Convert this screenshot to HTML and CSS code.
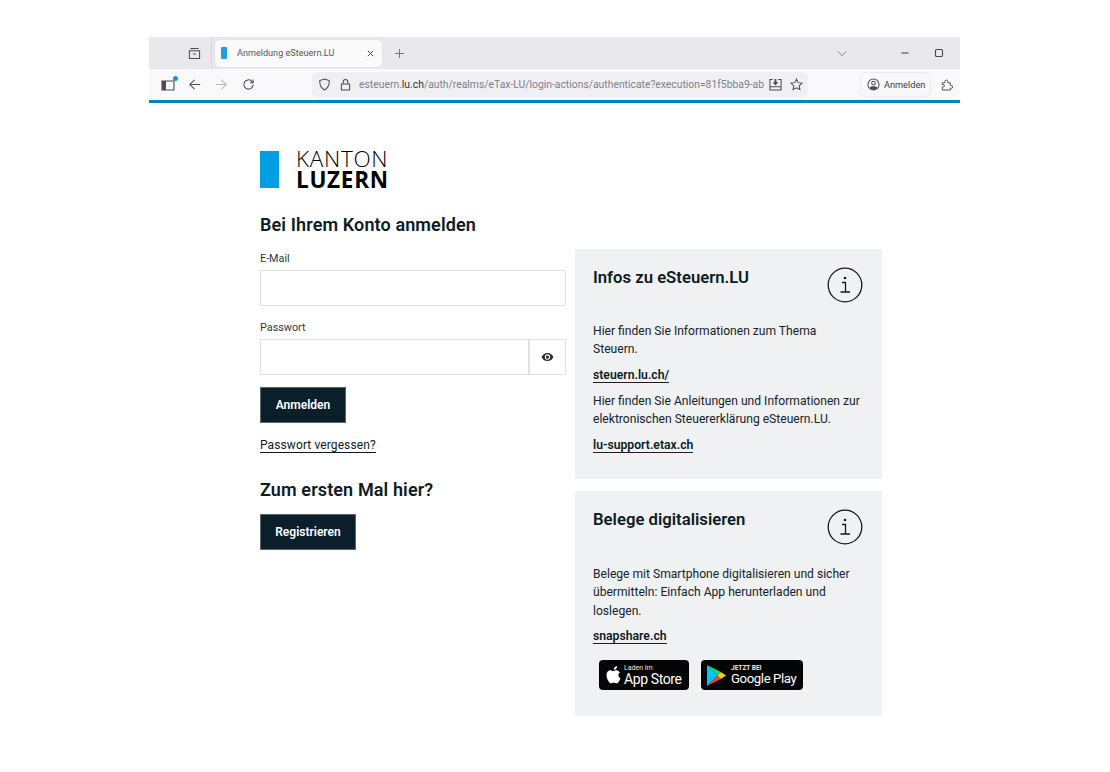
FILE: index.html
```html
<!DOCTYPE html>
<html lang="de">
<head>
    <meta charset="UTF-8">
    <title>Anmeldung eSteuern.LU</title>
    <link rel="stylesheet" href="styles.css">
</head>
<body>
<div class="window">
    <!-- Browser -->
    <div class="tabstrip">
        <svg class="ic tabs-ic" viewBox="0 0 14 14"><path d="M2.5 1.5h9M1.5 4h11v8.5h-11zM5.5 7.5h3"/></svg>
        <div class="strip-sep"></div>
        <div class="tab">
            <span class="favicon"></span>
            <span class="tab-title">Anmeldung eSteuern.LU</span>
            <svg class="ic tab-close" viewBox="0 0 10 10"><path d="M2 2l6 6M8 2l-6 6"/></svg>
        </div>
        <svg class="ic new-tab" viewBox="0 0 12 12"><path d="M6 1v10M1 6h10"/></svg>
        <div class="strip-right">
            <svg class="ic chev" viewBox="0 0 12 8"><path d="M1 1.5l5 5 5-5"/></svg>
            <svg class="ic minim" viewBox="0 0 10 10"><path d="M1.5 5h7"/></svg>
            <svg class="ic maxim" viewBox="0 0 10 10"><rect x="1.5" y="1.5" width="7" height="7" rx="1"/></svg>
        </div>
    </div>
    <div class="toolbar">
        <span class="sidebar-btn">
            <svg class="ic" viewBox="0 0 14 12" width="14" height="12"><path d="M1 2h12v9H1z"/><path class="fill" d="M1 2h4v9H1z"/></svg>
            <span class="dot"></span>
        </span>
        <svg class="ic nav back" viewBox="0 0 14 14"><path d="M13 7H2M7 2L2 7l5 5"/></svg>
        <svg class="ic nav fwd" viewBox="0 0 14 14"><path d="M1 7h11M7 2l5 5-5 5"/></svg>
        <svg class="ic nav reload" viewBox="0 0 14 14"><path d="M12 7a5 5 0 1 1-1.6-3.7L12 5M12 1.5V5H8.5"/></svg>
        <div class="urlbar">
            <svg class="ic shield" viewBox="0 0 14 14"><path d="M7 1l5.2 1.8c0 4.800-1.500 8.300-5.200 10.200C3.300 11.100 1.800 7.600 1.800 2.800z"/></svg>
            <svg class="ic lock" viewBox="0 0 12 14"><path d="M1.500 6.500h9v6.500h-9zM3.500 6.500V4a2.500 2.500 0 0 1 5 0v2.500"/></svg>
            <span class="url">esteuern.<b>lu.ch</b>/auth/realms/eTax-LU/login-actions/authenticate?execution=81f5bba9-ab</span>
            <svg class="ic save" viewBox="0 0 14 14"><path d="M4 1.500H1v11.500h12V1.500h-3M1 9.500h12"/><path class="fill" d="M6 1h2v3.500h2L7 8 4 4.500h2z"/></svg>
            <svg class="ic star" viewBox="0 0 14 14"><path d="M7 1.200l1.800 3.800 4.100.5-3 2.900.8 4.100L7 10.500l-3.700 2 .8-4.100-3-2.900 4.100-.5z"/></svg>
        </div>
        <div class="signin">
            <svg class="ic" viewBox="0 0 14 14" width="13" height="13"><circle cx="7" cy="7" r="6"/><circle cx="7" cy="5.500" r="2"/><path class="fill" d="M3 10.500c1-2 7-2 8 0-2 2.500-6 2.500-8 0z"/></svg>
            <span>Anmelden</span>
        </div>
        <svg class="ic ext" viewBox="0 0 14 14"><path d="M1.500 5h3V3.500a1.700 1.700 0 0 1 3.400 0V5h3v3h1a1.700 1.700 0 0 1 0 3.400h-1v2h-9.400V10h1a1.500 1.500 0 0 0 0-3h-1z"/></svg>
    </div>
    <div class="accent"></div>

    <!-- Seite -->
    <main class="page">
        <div class="logo">
            <span class="logo-bar"></span>
            <div class="logo-text">
                <span class="kanton">KANTON</span>
                <span class="luzern">LUZERN</span>
            </div>
        </div>
        <h1>Bei Ihrem Konto anmelden</h1>
        <div class="columns">
            <section class="login">
                <label class="first">E-Mail</label>
                <input class="field" type="text">
                <label>Passwort</label>
                <div class="pw-row">
                    <input class="field" type="password">
                    <button class="eye" type="button">
                        <svg viewBox="0 0 16 12" width="13" height="10"><path d="M8 1C4.500 1 1.800 3.200.7 6c1.100 2.800 3.800 5 7.300 5s6.200-2.200 7.300-5C14.200 3.200 11.500 1 8 1zm0 8.300A3.300 3.300 0 1 1 8 2.700a3.300 3.300 0 0 1 0 6.600zM8 4a2 2 0 1 0 0 4 2 2 0 0 0 0-4z"/></svg>
                    </button>
                </div>
                <button class="btn btn-login" type="button">Anmelden</button>
                <a class="forgot" href="#">Passwort vergessen?</a>
                <h2>Zum ersten Mal hier?</h2>
                <button class="btn btn-register" type="button">Registrieren</button>
            </section>
            <aside class="side">
                <div class="panel panel-info">
                    <div class="panel-head">
                        <h3>Infos zu eSteuern.LU</h3>
                        <svg class="info" viewBox="0 0 36 36"><circle cx="18" cy="18" r="16.800"/><path d="M15 15.500h3.500v9.500M13.500 25h9.500"/><circle class="i-dot" cx="18" cy="11" r="1.300"/></svg>
                    </div>
                    <p>Hier finden Sie Informationen zum Thema Steuern.</p>
                    <a href="#">steuern.lu.ch/</a>
                    <p>Hier finden Sie Anleitungen und Informationen zur elektronischen Steuererklärung eSteuern.LU.</p>
                    <a href="#">lu-support.etax.ch</a>
                </div>
                <div class="panel panel-docs">
                    <div class="panel-head">
                        <h3>Belege digitalisieren</h3>
                        <svg class="info" viewBox="0 0 36 36"><circle cx="18" cy="18" r="16.800"/><path d="M15 15.500h3.500v9.500M13.500 25h9.500"/><circle class="i-dot" cx="18" cy="11" r="1.300"/></svg>
                    </div>
                    <p>Belege mit Smartphone digitalisieren und sicher übermitteln: Einfach App herunterladen und loslegen.</p>
                    <a href="#">snapshare.ch</a>
                    <div class="stores">
                        <div class="store store-apple">
                            <svg viewBox="0 0 16 19" width="15" height="18"><path fill="#fff" d="M11.800 0c.1 1-.3 2-.9 2.800-.6.700-1.600 1.300-2.600 1.200-.1-1 .4-2 .9-2.600C9.800.6 10.900.1 11.800 0zM15 6.500c-1.100.7-1.800 1.800-1.800 3.100 0 1.500.9 2.800 2.300 3.400-.4 1.200-1 2.300-1.700 3.300-.7 1-1.500 2.100-2.600 2.100s-1.500-.7-2.900-.7-1.800.7-2.900.7c-1.100 0-2-1.100-2.700-2.200C1.600 14.500.5 11.700.5 9.400c0-3.300 2.100-5 4.200-5 1.100 0 2.100.8 2.800.8.700 0 1.800-.9 3.100-.9 1 0 2.500.4 3.400 1.700z"/></svg>
                            <div class="store-text">
                                <span class="small">Laden im</span>
                                <span class="big">App Store</span>
                            </div>
                        </div>
                        <div class="store store-google">
                            <svg viewBox="0 0 19 21" width="19" height="21">
                                <path fill="#00c3ff" d="M0 0v21l10.500-10.500z"/>
                                <path fill="#00e676" d="M0 0l10.500 10.500 3.400-3.400z"/>
                                <path fill="#ff3a44" d="M0 21l10.500-10.500 3.400 3.400z"/>
                                <path fill="#ffd000" d="M13.900 7.100l-3.400 3.400 3.400 3.400 5.100-3.400z"/>
                            </svg>
                            <div class="store-text">
                                <span class="small caps">JETZT BEI</span>
                                <span class="big">Google Play</span>
                            </div>
                        </div>
                    </div>
                </div>
            </aside>
        </div>
    </main>
</div>
</body>
</html>
```

FILE: styles.css
```css
* {
    box-sizing: border-box;
}
html, body {
    margin: 0;
    height: 772px;
    overflow: hidden;
    background: #ffffff;
}
body {
    font-family: Roboto, Arial, sans-serif;
    color: #0d1b24;
}
.window {
    width: 811px;
    margin: 37px 0 0 149px;
}

/* browser */
.ic {
    fill: none;
    stroke: #4a4a50;
    stroke-width: 1.1;
    flex: none;
}
.ic .fill {
    fill: #4a4a50;
    stroke: none;
}
.tabstrip {
    height: 32px;
    background: #e9e9ed;
    display: flex;
    align-items: center;
}
.tabs-ic {
    width: 13px;
    height: 13px;
    margin-left: 39px;
}
.strip-sep {
    width: 1px;
    height: 32px;
    background: #d8d8dc;
    margin-left: 10px;
}
.tab {
    width: 167px;
    height: 27px;
    margin-left: 3px;
    background: #fafafc;
    border-radius: 5px;
    display: flex;
    align-items: center;
    padding-left: 6px;
    box-shadow: 0 0 2px rgba(0, 0, 0, 0.08);
}
.favicon {
    width: 6px;
    height: 12px;
    background: #1e9fe0;
    border-radius: 1px;
}
.tab-title {
    font-size: 9.100px;
    color: #55555c;
    margin-left: 10px;
    width: 122px;
    white-space: nowrap;
}
.tab-close {
    width: 9px;
    height: 9px;
    margin-left: 7px;
}
.new-tab {
    width: 11px;
    height: 11px;
    margin-left: 12px;
    stroke: #77777c;
}
.strip-right {
    margin-left: auto;
    display: flex;
    align-items: center;
    padding-right: 16px;
}
.chev {
    width: 10px;
    height: 7px;
    stroke: #77777c;
}
.minim {
    width: 10px;
    height: 10px;
    margin-left: 53px;
}
.maxim {
    width: 10px;
    height: 10px;
    margin-left: 24px;
}
.toolbar {
    height: 31px;
    background: #f9f9fb;
    display: flex;
    align-items: center;
}
.sidebar-btn {
    position: relative;
    display: flex;
    margin-left: 12px;
}
.dot {
    position: absolute;
    top: -3px;
    right: -3px;
    width: 5px;
    height: 5px;
    background: #1a90e8;
    border-radius: 50%;
}
.nav {
    width: 13px;
    height: 13px;
}
.back {
    margin-left: 13px;
}
.fwd {
    margin-left: 14px;
    stroke: #b5b5ba;
}
.reload {
    margin-left: 14px;
}
.urlbar {
    width: 496px;
    height: 25px;
    margin-left: 57px;
    background: #f0f0f4;
    border-radius: 6px;
    display: flex;
    align-items: center;
    padding-left: 6px;
}
.shield {
    width: 13px;
    height: 13px;
}
.lock {
    width: 11px;
    height: 13px;
    margin-left: 9px;
}
.url {
    font-size: 10.350px;
    color: #80808a;
    margin-left: 8px;
    width: 406px;
    white-space: nowrap;
}
.url b {
    font-weight: 400;
    color: #303036;
}
.save {
    width: 13px;
    height: 13px;
    margin-left: 4px;
}
.star {
    width: 13px;
    height: 13px;
    margin-left: 8px;
}
.signin {
    width: 71px;
    height: 25px;
    margin-left: 52px;
    border: 1px solid #ececf0;
    border-radius: 6px;
    display: flex;
    align-items: center;
    gap: 4px;
    padding-left: 6px;
    font-size: 9.200px;
    color: #3a3a40;
}
.ext {
    width: 12px;
    height: 13px;
    margin-left: 10px;
}
.accent {
    height: 3px;
    background: #0a82bf;
}

/* seite */
.page {
    padding: 48px 78px 0 111px;
}
.logo {
    display: flex;
    height: 37px;
}
.logo-bar {
    width: 19px;
    background: #009ee3;
}
.logo-text {
    margin: -2px 0 0 17px;
    display: flex;
    flex-direction: column;
    color: #000000;
    font-family: "Open Sans", Arial, sans-serif;
    font-size: 22.500px;
    line-height: 20.500px;
    letter-spacing: 0.7px;
}
.kanton {
    font-weight: 300;
}
.luzern {
    font-weight: 700;
}
h1, h2 {
    font-size: 18px;
    font-weight: 600;
    line-height: 24px;
    letter-spacing: 0.12px;
    margin: 0;
}
h1 {
    margin-top: 25px;
    height: 24px;
}
.columns {
    display: flex;
    gap: 9px;
    margin-top: 12px;
}
.login {
    width: 306px;
    display: flex;
    flex-direction: column;
    align-items: flex-start;
}
label {
    font-size: 10.800px;
    line-height: 14px;
    color: #2b3840;
    margin-top: 15px;
    margin-bottom: 4px;
}
label.first {
    margin-top: 3px;
}
.field {
    display: block;
    width: 306px;
    height: 36px;
    border: 1px solid #dfe1e3;
    background: #ffffff;
    padding: 0 8px;
    outline: none;
}
.pw-row {
    display: flex;
    width: 306px;
}
.pw-row .field {
    width: 269px;
}
.eye {
    width: 37px;
    height: 36px;
    border: 1px solid #dfe1e3;
    background: #ffffff;
    padding: 0;
    display: flex;
    align-items: center;
    justify-content: center;
}
.eye svg {
    fill: #2b2b2b;
}
.btn {
    height: 36px;
    padding: 0;
    border: 1px solid #5a666d;
    background: #0b1f2b;
    color: #ffffff;
    font-family: Roboto, Arial, sans-serif;
    font-size: 12px;
    font-weight: 600;
}
.btn-login {
    width: 86px;
    margin-top: 12px;
}
.btn-register {
    width: 96px;
}
.forgot {
    margin-top: 16px;
    font-size: 12px;
    line-height: 13px;
    letter-spacing: 0.1px;
    color: #0d1b24;
    text-decoration: none;
    border-bottom: 1px solid #0d1b24;
}
h2 {
    margin-top: 25px;
    margin-bottom: 12px;
}
.side {
    width: 307px;
    display: flex;
    flex-direction: column;
    gap: 12px;
}
.panel {
    background: #eff1f3;
    padding: 17px 18px 0;
}
.panel-info {
    height: 230px;
}
.panel-docs {
    height: 225px;
    padding-top: 18px;
}
.panel-head {
    display: flex;
    justify-content: space-between;
    height: 56px;
}
h3 {
    font-size: 16.700px;
    font-weight: 600;
    line-height: 24px;
    margin: 0;
}
.panel-docs h3 {
    margin-top: -1px;
}
.info {
    width: 36px;
    height: 36px;
    margin: 1px 1px 0 0;
    fill: none;
    stroke: #0d1b24;
    stroke-width: 1.300;
}
.panel-docs .info {
    margin-top: 0;
}
.info .i-dot {
    fill: #0d1b24;
    stroke: none;
}
.panel p {
    font-size: 12.100px;
    line-height: 18.300px;
    margin: 0 0 9.500px;
    padding-right: 2px;
    color: #14232c;
}
.panel a {
    display: block;
    width: fit-content;
    font-size: 12.200px;
    font-weight: 600;
    line-height: 14px;
    margin-bottom: 9px;
    color: #0d1b24;
    text-decoration: none;
    border-bottom: 1px solid #2a1a20;
}
.stores {
    display: flex;
    gap: 12px;
    margin: 16px 0 0 6px;
}
.store {
    height: 30px;
    background: #050505;
    border-radius: 4px;
    display: flex;
    align-items: center;
    color: #ffffff;
}
.store-apple {
    width: 90px;
    padding-left: 7px;
    gap: 3px;
}
.store-google {
    width: 102px;
    padding-left: 6px;
    gap: 5px;
}
.store-text {
    display: flex;
    flex-direction: column;
    white-space: nowrap;
}
.small {
    font-size: 7px;
    line-height: 7px;
    color: #e8e8e8;
}
.small.caps {
    font-weight: 700;
    font-size: 6.500px;
}
.big {
    font-size: 14px;
    line-height: 14px;
    letter-spacing: -0.4px;
}
.store-google .big {
    font-size: 13.200px;
}
```
